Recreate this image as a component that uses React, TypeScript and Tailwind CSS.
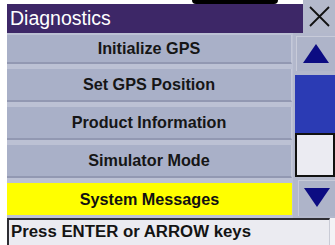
import React from 'react';

const items = ['Initialize GPS', 'Set GPS Position', 'Product Information', 'Simulator Mode', 'System Messages'];

function MenuButton({ label, selected, first, last }: { label: string; selected?: boolean; first?: boolean; last?: boolean }) {
  const height = first ? 'h-[29px]' : last ? 'h-[32px]' : 'h-[33px]';
  if (selected) {
    return (
      <div className={`${height} flex w-[285px] items-center justify-center bg-[#ffff00] text-[16.2px] font-bold text-[#111]`}>
        {label}
      </div>
    );
  }
  return (
    <div
      className={`${height} flex w-[285px] items-center justify-center border-b-2 border-r border-b-[#9298b2] border-r-[#c4c8d8] bg-[#a9b0c8] text-[16.2px] font-bold text-[#161616]`}
    >
      {label}
    </div>
  );
}

function Arrow({ up }: { up?: boolean }) {
  return (
    <svg width="26" height="19" viewBox="0 0 26 19">
      <polygon points={up ? '13,0 26,19 0,19' : '0,0 26,0 13,19'} fill="#0c0c82" />
    </svg>
  );
}

export default function App() {
  return (
    <div className="flex h-[245px] w-[335px] flex-col overflow-hidden bg-white font-['Liberation_Sans',Arial,sans-serif]">
      <div className="flex h-[33px]">
        <div className="w-[7px]" />
        <div className="flex w-[296px] flex-col">
          <div className="h-[4px]">
            <div className="ml-[185px] h-[4px] w-[86px] rounded-b-full bg-black" />
          </div>
          <div className="flex flex-1 items-center bg-[#3d2767] pl-[3px] pt-[1px] text-[19.5px] leading-none text-white">
            Diagnostics
          </div>
        </div>
        <div className="flex w-[32px] items-center justify-center bg-[#b4b9cb]">
          <svg width="21" height="21" viewBox="0 0 21 21">
            <path d="M1 1 L20 20 M20 1 L1 20" stroke="#111" strokeWidth="1.8" />
          </svg>
        </div>
      </div>

      <div className="flex h-[185px]">
        <div className="w-[7px]" />
        <div className="flex w-[286px] flex-col gap-[5px] bg-[#bcc1d4] pt-[2px]">
          {items.map((label, i) => (
            <MenuButton key={label} label={label} first={i === 0} last={i === items.length - 1} selected={i === items.length - 1} />
          ))}
        </div>
        <div className="flex w-[42px] flex-col bg-[#b3b8cc] pt-[3px]">
          <div className="ml-[3px] flex h-[35px] items-center justify-center border-l border-t border-l-[#c8cbd9] border-t-[#c8cbd9] bg-[#aeb4c9] pb-[2px]">
            <Arrow up />
          </div>
          <div className="ml-[2px] mt-[4px] h-[58px] bg-[#2b3bb4]" />
          <div className="ml-[2px] h-[44px] border-2 border-[#111] bg-[#ebebf2]" />
          <div className="ml-[5px] mt-[3px] flex h-[36px] items-center justify-center border-l border-t border-l-[#c8cbd9] border-t-[#c8cbd9] bg-[#aeb4c9] pb-[3px]">
            <Arrow />
          </div>
        </div>
      </div>

      <div className="flex flex-1">
        <div className="w-[7px]" />
        <div className="flex w-[323px] items-center border-l-2 border-t-2 border-r border-l-[#2e2e34] border-t-[#2e2e34] border-r-[#c9cbd6] bg-[#ebebf1] pl-[2px] text-[16.8px] font-bold leading-none text-[#141414]">
          Press ENTER or ARROW keys
        </div>
        <div className="flex-1 bg-[#f3f3f6]" />
      </div>
    </div>
  );
}
